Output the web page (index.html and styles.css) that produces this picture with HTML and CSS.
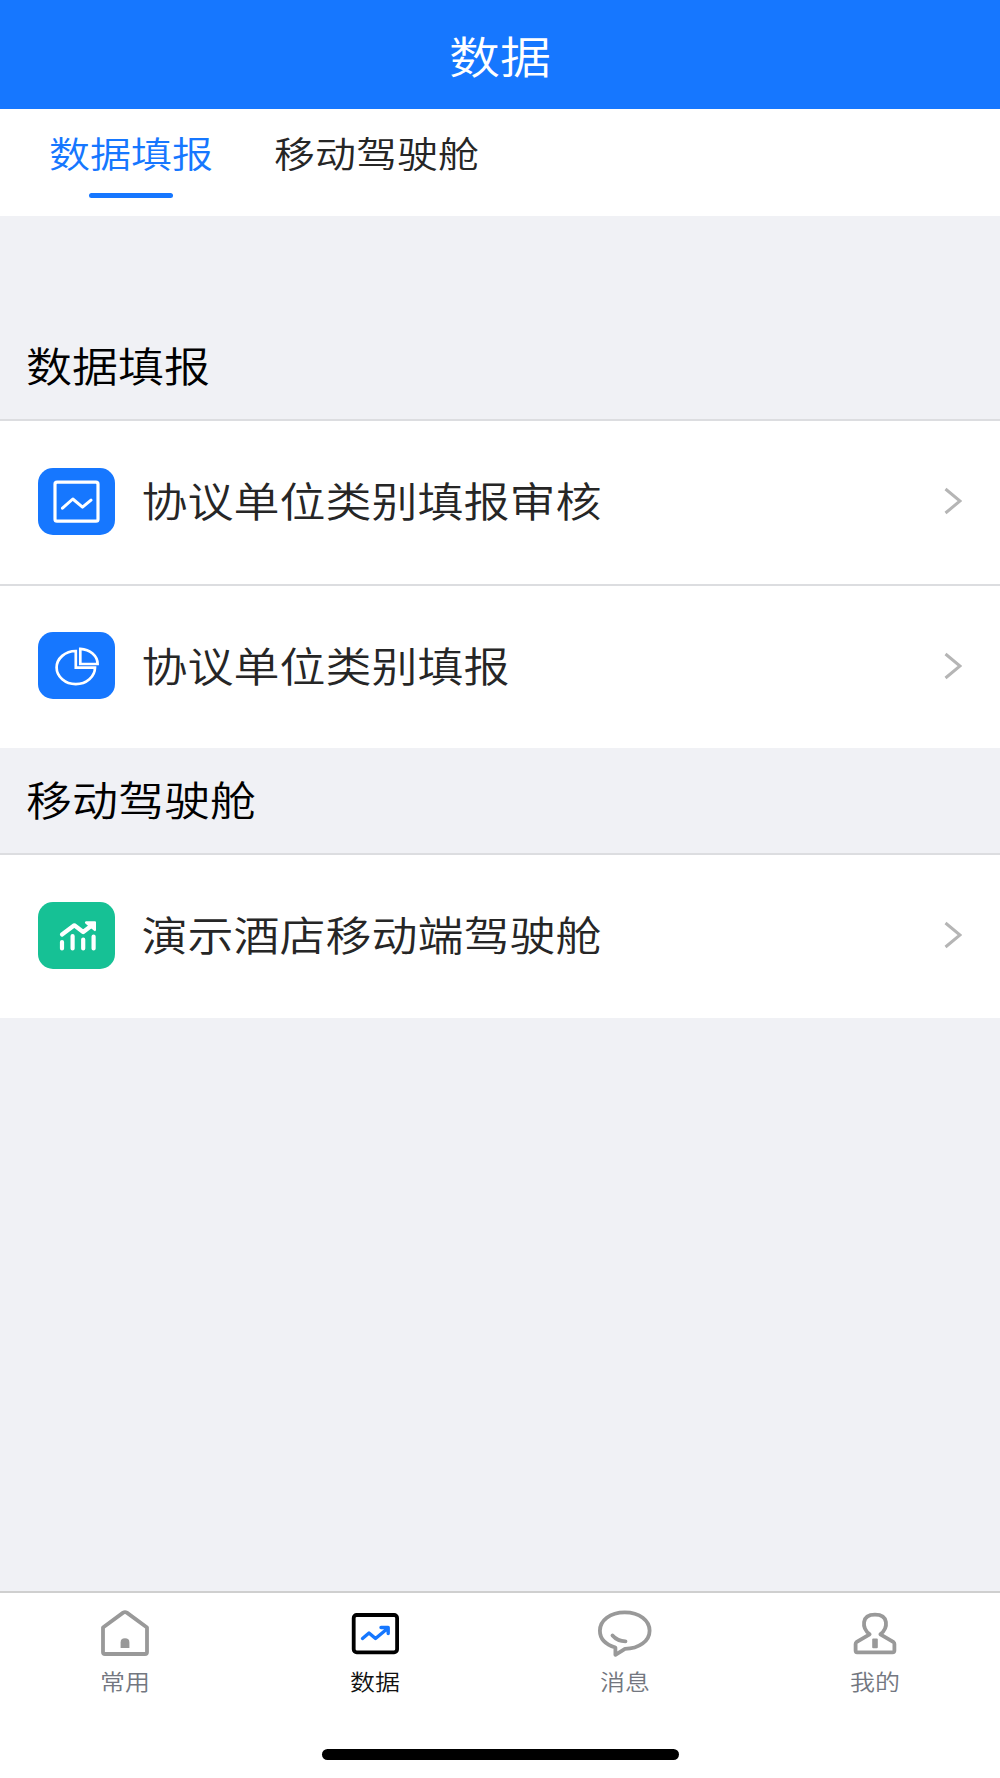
FILE: index.html
```
<!DOCTYPE html>
<html lang="zh-CN">
<head>
  <meta charset="UTF-8" />
  <title>数据</title>
  <link rel="stylesheet" href="styles.css">
</head>
<body>

<header class="header"><h1 class="text">数据</h1></header>

<nav class="tabs">
  <a class="tab active"><span class="text">数据填报</span></a>
  <a class="tab"><span class="text">移动驾驶舱</span></a>
</nav>

<main class="content">
  <h2 class="group-title"><span class="text">数据填报</span></h2>
  <div class="row">
    <svg class="icon" viewBox="0 0 77 67">
      <rect x="17" y="14.2" width="43" height="39" rx="2" fill="none" stroke="#fff" stroke-width="3.2"/>
      <path d="M24.5 40.2L34.8 31L44.5 39.2L53 32.2" fill="none" stroke="#fff" stroke-width="3" stroke-linecap="round" stroke-linejoin="round"/>
    </svg>
    <span class="text">协议单位类别填报审核</span>
    <svg class="arrow" viewBox="0 0 18 28"><path d="M1.5 2L16 14L1.5 26"/></svg>
  </div>
  <div class="row">
    <svg class="icon" viewBox="0 0 77 67">
      <g fill="none" stroke="#fff" stroke-width="2.7">
        <path d="M37.8 19A19.2 16.6 0 1 0 57 35.6H37.8Z"/>
        <path d="M42.3 16.8A18.2 15.2 0 0 1 59.6 32H42.3Z"/>
      </g>
    </svg>
    <span class="text">协议单位类别填报</span>
    <svg class="arrow" viewBox="0 0 18 28"><path d="M1.5 2L16 14L1.5 26"/></svg>
  </div>

  <h2 class="group-title"><span class="text">移动驾驶舱</span></h2>
  <div class="row">
    <svg class="icon green" viewBox="0 0 77 67">
      <g fill="none" stroke="#fff" stroke-width="4.2" stroke-linecap="round" stroke-linejoin="round">
        <path d="M24 40V46.5M34.6 34V46.5M45.2 37.5V46.5M55.6 34.5V46.5"/>
        <path d="M24 32.5L36.3 23.3L45.2 30L53 24"/>
      </g>
      <path d="M48 19.2H57Q58 19.2 58 20.2V28Q57.5 30 55.8 28.5L47.6 21.8Q46 20 48 19.2Z" fill="#fff"/>
    </svg>
    <span class="text">演示酒店移动端驾驶舱</span>
    <svg class="arrow" viewBox="0 0 18 28"><path d="M1.5 2L16 14L1.5 26"/></svg>
  </div>
</main>

<footer class="tabbar">
  <div class="items">
    <a class="item">
      <svg viewBox="0 0 60 54">
        <path d="M8 21.5L28.2 6.6Q30 5.5 31.8 6.6L52 21.5V46Q52 48 50 48H10Q8 48 8 46Z"/>
        <path d="M25.6 42V36.5Q25.6 32.3 30 32.3T34.4 36.5V42Z" class="solid"/>
      </svg>
      <span class="text">常用</span>
    </a>
    <a class="item active">
      <svg viewBox="0 0 60 54">
        <rect x="8.7" y="9" width="43.4" height="37.3" rx="3"/>
        <path class="trend" d="M17.5 32.5L24 27L30.5 32.5L42 23M36 21.5H43.2V27.5"/>
      </svg>
      <span class="text">数据</span>
    </a>
    <a class="item">
      <svg viewBox="0 0 60 54">
        <path d="M20.4 41.5C10.5 38.5 4.9 32.5 4.9 24.7C4.9 14.5 15 6.4 29.8 6.4S54.6 14.5 54.6 24.7S44 42.8 30 42.8L20.4 48.8Z"/>
        <path d="M17.5 29.5Q22.5 35.3 30.5 35.3" stroke-linecap="round"/>
      </svg>
      <span class="text">消息</span>
    </a>
    <a class="item">
      <svg viewBox="0 0 60 54">
        <path d="M24.6 28.3C16.7 22 16 8.7 30 8.7S43.3 22 35.4 28.3L48.6 36.2Q49.4 36.8 49.4 38V44.5Q49.4 46.3 47.6 46.3H12Q10.6 46.3 10.6 44.5V38Q10.6 36.8 11.4 36.2Z"/>
        <rect class="solid" x="27.2" y="32.5" width="5.6" height="9.8" rx="1"/>
      </svg>
      <span class="text">我的</span>
    </a>
  </div>
  <div class="home-bar"></div>
</footer>

</body>
</html>
```
FILE: styles.css
```
* { box-sizing: border-box; }
body {
  margin: 0; height: 1778px;
  display: flex; flex-direction: column;
  background: #f0f1f5; color: #262626;
  font-family: "Noto Sans CJK SC", sans-serif; font-weight: 350;
}
h1, h2 { margin: 0; font-weight: 350; }

/* glyphs are a little wider than tall */
.text {
  display: inline-block; line-height: 1; white-space: nowrap;
  transform: translateY(-2px) scaleY(0.88);
}

.header {
  height: 109px; padding-top: 5px;
  display: flex; align-items: center; justify-content: center;
  background: #1677ff; color: #fff;
}
.header .text { font-size: 51px; }

.tabs {
  height: 107px; padding: 25px 49px 0;
  display: flex; gap: 61px;
  background: #fff; font-size: 41px;
}
.tab { display: flex; flex-direction: column; align-items: center; }
.tab.active { color: #1677ff; }
.tab.active::after {
  content: ""; width: 84px; height: 5px; margin-top: 18px;
  border-radius: 3px; background: #1677ff;
}

.content { flex: 1; padding-top: 98px; }
.group-title {
  height: 105px; padding: 0 0 1px 26px;
  display: flex; align-items: center;
  font-size: 46px; color: #000;
}
.row {
  height: 165px; padding: 0 38px 1px 38px;
  display: flex; align-items: center;
  background: #fff; box-shadow: inset 0 2px #dcdde0;
  font-size: 46px;
}
.row + .row { height: 164px; }
.icon {
  width: 77px; height: 67px; margin-right: 26.5px;
  border-radius: 15px; background: #1677ff;
}
.icon.green { background: #16c195; }
.arrow {
  width: 18px; height: 28px; margin-left: auto;
  fill: none; stroke: #b5b5b5; stroke-width: 3;
}

.tabbar {
  height: 187px; border-top: 2px solid #cfcfcf;
  display: flex; flex-direction: column; align-items: center;
  background: #fff;
}
.items { width: 100%; display: grid; grid-template-columns: repeat(4, 1fr); }
.item {
  padding-top: 13px;
  display: flex; flex-direction: column; align-items: center;
  font-size: 25px; color: #737780;
}
.item svg {
  width: 60px; height: 54px; margin-bottom: 10px;
  fill: none; stroke: #999; stroke-width: 3.8; stroke-linejoin: round;
}
.item .solid { fill: #999; stroke: none; }
.item.active { color: #111; }
.item.active svg { stroke: #000; }
.item.active .trend { stroke: #1677ff; stroke-width: 3.4; stroke-linecap: round; }
.home-bar { width: 357px; height: 11px; margin-top: 54px; border-radius: 6px; background: #000; }
```
